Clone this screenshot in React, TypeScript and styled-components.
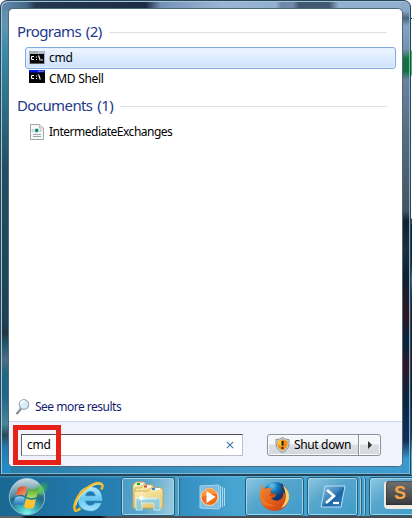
import React from 'react';
import styled, { createGlobalStyle } from 'styled-components';

const GlobalStyle = createGlobalStyle`
  *, *::before, *::after { box-sizing: border-box; }
  body { margin: 0; overflow: hidden; }
  svg { display: block; flex: none; }
`;

const Desktop = styled.main`
  width: 412px;
  height: 518px;
  display: flex;
  flex-direction: column;
  overflow: hidden;
  font: 12px/16px "Noto Sans", "Open Sans", sans-serif;
  color: #000;
  background: linear-gradient(#fafafa 0 18px, #222 18px 19px, #f5f5f5 19px 50px, #35cb3f 51px 75px, #fafafa 76px 218px, #34465e 219px 224px, #102440 225px 265px, #47678d 278px, #152c4e 300px, #4c1022 316px, #102344 335px, #451326 363px, #0c1c3b 390px, #123a6d 435px, #42bce4 455px, #398cc5);
`;

const Frame = styled.section`
  width: 411px;
  height: 475px;
  padding: 7px;
  border: 1px solid #2b4657;
  border-radius: 7px 7px 0 0;
  box-shadow: inset 1px 1px 0 #a0c4d8, inset -1px -1px 0 #7ab4d3;
  background:
    linear-gradient(#91abc9 0, #8aa6c6 10px, #4e637f 17px, #88a1c0 25px, #7890ae 48px, #13713b 58px, #14703d 70px, #6b819c 79px, #58697b 140px, #445361 210px, #14212d 220px, #202e3a 248px, #101f2e 275px, #32151e 315px, #0c2338 340px, #341722 365px, #0d2540 400px, #152e58 440px, #3b98cf 458px) right top / 9px 100% no-repeat,
    linear-gradient(90deg, #638aae 0, #456988 25px, #243850 35px, #1d2c43 145px, #7792b8 160px, #9ab4d6 220px, #93b0d0 275px, #7088a8 280px 292px, #425873 298px 328px, #93b0d0 338px) left top / 100% 9px no-repeat,
    linear-gradient(#638aae 0, #6096b2 25px, #3a8dab 48px, #2d778e 90px, #244c60 170px, #204456 300px, #1d3e50 325px, #26333e 332px, #20566e 343px, #506b83 358px, #216683 372px, #20658a 395px, #47869a 423px, #28485b 434px, #2379ac 446px, #238cc7 465px) left top / 9px 100% no-repeat,
    linear-gradient(90deg, #297da9, #419acb 60%, #3e9fd2);
`;

const Results = styled.div`
  width: 395px;
  height: 459px;
  display: flex;
  flex-direction: column;
  overflow: hidden;
  border: 1px solid #4c687c;
  border-radius: 5px;
  background: #fff;
`;

const Body = styled.div`
  flex: 1;
  min-height: 0;
  display: flex;
  flex-direction: column;
  padding: 11px 6px 4px 8px;
`;

const Heading = styled.h2<{ $gap?: number }>`
  height: 22px;
  margin: ${({ $gap = 0 }) => $gap}px 9px 0 0;
  display: flex;
  align-items: center;
  gap: 7px;
  color: #23398b;
  font-size: 15px;
  line-height: 22px;
  font-weight: 400;
  word-spacing: 1.5px;
  &::after { content: ''; flex: 1; height: 1px; background: #dedfe0; margin-top: 3px; }
`;

const Text = styled.span<{ $size?: number; $track?: number; $color?: string }>`
  white-space: nowrap;
  font-size: ${({ $size = 12 }) => $size}px;
  letter-spacing: ${({ $track = 0 }) => $track}px;
  color: ${({ $color = 'inherit' }) => $color};
`;

const ResultRow = styled.div<{ $selected?: boolean; $height: number; $gap?: number }>`
  height: ${({ $height }) => $height}px;
  margin: ${({ $gap = 0 }) => $gap}px 0 0 8px;
  padding-left: 3px;
  display: flex;
  align-items: center;
  gap: 4px;
  border: 1px solid ${({ $selected }) => ($selected ? '#83a9da' : 'transparent')};
  border-radius: 3px;
  background: ${({ $selected }) => ($selected ? 'linear-gradient(#edf5ff, #cee2fe)' : 'transparent')};
  box-shadow: ${({ $selected }) => ($selected ? 'inset 0 0 0 1px #e4f0ff' : 'none')};
`;

const MoreResults = styled.div`
  margin-top: auto;
  height: 20px;
  display: flex;
  align-items: center;
  gap: 4px;
  margin-left: -2px;
`;

const Footer = styled.footer`
  height: 45px;
  display: flex;
  align-items: center;
  padding: 1px 21px 0 5px;
  border-top: 1px solid #ccd9ea;
  background: #f0f3fb;
`;

const SearchBox = styled.div`
  width: 222px;
  height: 22px;
  margin-left: 7px;
  display: flex;
  align-items: center;
  justify-content: space-between;
  padding: 0 8px 0 5px;
  background: #fff;
  border: 1px solid #b8bfc8;
  border-top-color: #4f5358;
  border-left-color: #5d6066;
`;

const Callout = styled.div`
  position: absolute;
  left: 13px;
  top: 425px;
  width: 48px;
  height: 40px;
  border: 5px solid #e62117;
`;

const ShutdownGroup = styled.div`
  width: 114px;
  height: 22px;
  margin-left: auto;
  display: flex;
  border: 1px solid #8c9098;
  border-radius: 3px;
  background: linear-gradient(#f5f6f8 0 45%, #dcdee3 50%, #d5d8de);
  box-shadow: inset 0 0 0 1px #fafbfc;
`;

const ShutdownButton = styled.div`
  width: 91px;
  display: flex;
  align-items: center;
  gap: 4px;
  padding-left: 7px;
  border-right: 1px solid #8c9098;
`;

const ArrowButton = styled.div`
  flex: 1;
  display: grid;
  place-items: center;
  border-left: 1px solid #fafbfc;
`;

const Taskbar = styled.nav`
  height: 43px;
  display: flex;
  border-top: 1px solid #174258;
  background:
    linear-gradient(90deg, #626468 0 20px, #101216 26px 100px, #4b4d53 108px) left bottom / 100% 2px no-repeat,
    linear-gradient(rgba(136,205,238,.45), transparent 2px),
    linear-gradient(90deg, #196892 0, #2277a9 75px, #2e89bd 165px, #48a4d0 235px, #3e9dce);
`;

const TaskItem = styled.div<{ $width: number; $gap?: number; $open?: boolean; $shift?: number; $bright?: boolean }>`
  width: ${({ $width }) => $width}px;
  height: 39px;
  flex: none;
  margin: 1px 0 0 ${({ $gap = 0 }) => $gap}px;
  padding-left: ${({ $shift = 0 }) => $shift}px;
  display: flex;
  align-items: center;
  justify-content: ${({ $shift }) => ($shift ? 'flex-start' : 'center')};
  border: ${({ $open }) => ($open ? '1px solid #245c76' : '0')};
  border-radius: 3px;
  box-shadow: ${({ $open }) => ($open ? 'inset 0 0 0 1px #a1d5ea' : 'none')};
  background: ${({ $open, $bright }) => ($open ? ($bright ? 'linear-gradient(100deg, #4b9bc4, #5aa6cb 45%, #93c7de 90%)' : 'linear-gradient(145deg, #8ec7e1 0, #57a6cc 40%, #3e9cca)') : 'transparent')};
`;

const StackEdge = styled.div<{ $width?: number }>`
  width: ${({ $width = 4 }) => $width}px;
  height: 39px;
  margin-top: 1px;
  flex: none;
  border-right: 1px solid #2b657e;
  border-radius: 0 3px 3px 0;
  box-shadow: inset -1px 0 #93cce4;
  background: #469fc8;
`;

function ConsoleIcon({ blue = false }: { blue?: boolean }) {
  return <svg width="16" height={blue ? 18 : 16} viewBox={blue ? '0 0 16 18' : '0 -1 16 16'}>
    <path d="M0 0h16v13H0z" fill={blue ? '#070707' : '#aeb3b9'} />
    <path d="M1 3h14v9.500H1z" fill="#050505" />
    <path d="M0 0h16v2.500H0z" fill={blue ? '#0716df' : '#a3abb4'} />
    <path d="M9.500 1.200h1M11.500 1.200h1M13.500 1.200h1" stroke="#fff" />
    <path d="M5 5.500H3l-.5.5v2l.5.500h2M7 6h1M7 8.500h1M9.500 4.500l1.800 5" fill="none" stroke="#fff" strokeWidth="1.100" />
    {!blue && <path d="M12 9h2" stroke="#fff" />}
  </svg>;
}

function DocumentIcon() {
  return <svg width="16" height="16" viewBox="0 0 16 16">
    <path d="M1.500.5h9L14.500 4v11.500h-13z" fill="#f8f9f9" stroke="#a0a5a8" /><path d="M10.500.5V4h4" fill="#dfe3e4" stroke="#b5babc" />
    <circle cx="7.600" cy="6.500" r="2" fill="#19a77c" /><circle cx="8" cy="6.200" r=".9" fill="#21559c" />
    <path d="M4.500 5L3 6.500 4.500 8M10.700 5l1.500 1.500L10.700 8" fill="none" stroke="#81909a" strokeWidth=".8" /><path d="M4 10.500h8M4 12.500h8" stroke="#9aa5ab" />
  </svg>;
}

function SearchIcon() {
  return <svg width="16" height="18" viewBox="0 0 16 18"><path d="M6 10.500L1.500 16" stroke="#777c82" strokeWidth="2.200" /><path d="M5.500 10.500L1 15.500" stroke="#cfd4d7" strokeWidth=".8" /><circle cx="9" cy="6.500" r="4.800" fill="#d7edfa" stroke="#9fa9b4" strokeWidth="1.200" /><path d="M6 6q0-3 3.500-3" fill="none" stroke="#fff" strokeWidth="1.800" /></svg>;
}

function ShieldIcon() {
  return <svg width="15" height="16" viewBox="0 0 15 16"><path d="M7.5.5Q10 2.8 14 2.5V7q-.5 6-6.5 8.5Q1.5 13 1 7V2.5Q5 2.8 7.5.5" fill="#d5dade" stroke="#88929b" /><path d="M7.5 2Q9.8 4 12.7 3.7V7q-.5 4.5-5.2 6.8Q2.800 11.500 2.300 7V3.700Q5.200 4 7.500 2" fill="#ed8d13" /><path d="M3 4q2.500 0 4-1.300v6.100Q4 9 2.500 7z" fill="#ffc338" /><path d="M7.500 4v4.500" stroke="#211b13" strokeWidth="2" /><circle cx="7.500" cy="11" r="1.100" fill="#211b13" /></svg>;
}

function StartIcon() {
  return <svg width="43" height="40" viewBox="0 0 43 40">
    <defs>
      <radialGradient id="orb" cx=".5" cy="1" r="1"><stop stopColor="#88fff0" /><stop offset=".25" stopColor="#45bcc2" /><stop offset=".6" stopColor="#206783" /><stop offset="1" stopColor="#8da9b6" /></radialGradient>
      <linearGradient id="orbShine" x2="0" y2="1"><stop stopColor="#ecf4f5" stopOpacity=".65" /><stop offset="1" stopColor="#aacbd5" stopOpacity=".18" /></linearGradient>
      <radialGradient id="green"><stop stopColor="#55d644" stopOpacity=".9" /><stop offset="1" stopColor="#2fa646" stopOpacity="0" /></radialGradient>
      <linearGradient id="red" x2="1" y2="1"><stop stopColor="#cc3b1e" /><stop offset="1" stopColor="#ffa270" /></linearGradient>
      <linearGradient id="leaf" x2="0" y2="1"><stop stopColor="#4ba52e" /><stop offset="1" stopColor="#b6dd5b" /></linearGradient>
      <linearGradient id="blue" x2="0" y2="1"><stop stopColor="#8dcff2" /><stop offset="1" stopColor="#246cbc" /></linearGradient>
    </defs>
    <circle cx="19" cy="20" r="17.700" fill="url(#orb)" stroke="#8fbdce" /><path d="M2 18a17 17 0 0 1 34 0Q21 13 2 22" fill="url(#orbShine)" />
    <ellipse cx="32" cy="13" rx="12" ry="7" fill="url(#green)" transform="rotate(-40 32 13)" />
    <path d="M10 11Q14.500 8 19 10.500L17 19q-5-2.500-9.500 0z" fill="url(#red)" /><path d="M20.500 11.500q5 2.500 10-.5l-2 9q-5 2-10 0z" fill="url(#leaf)" /><path d="M7.200 20.500q4.500-2.500 9.500 0l-2 8q-4.500-2.500-9.500 0z" fill="url(#blue)" /><path d="M18 21.500q5 2.500 10 .5l-2 8.500q-5 2.500-10-.5z" fill="#ffc331" />
  </svg>;
}

function ExplorerEIcon() {
  return <svg width="32" height="32" viewBox="0 0 34 34">
    <defs><linearGradient id="ie" x2="0" y2="1"><stop stopColor="#b8eafd" /><stop offset=".5" stopColor="#67c8f0" /><stop offset="1" stopColor="#a2e1fb" /></linearGradient></defs>
    <path fillRule="evenodd" d="M31 21H13q.7 5 5.500 5 3.500 0 5-2.500h6.500Q27 32 18 32 5.500 31 5.500 19T18 6q13 0 13 15M13 16h11q-1-5-5.500-5T13 16" fill="url(#ie)" stroke="#4eb2df" strokeWidth=".5" />
    <path d="M8 29Q1 35 1.500 27 3 16 14 8 27-1 31 4q1 2-1 5" fill="none" stroke="#edb92d" strokeWidth="2.800" /><path d="M3 26Q5 16 16 8 26 1 30 4" fill="none" stroke="#ffe991" />
  </svg>;
}

function FoldersIcon() {
  return <svg width="33" height="31" viewBox="0 0 33 31">
    <defs><linearGradient id="folder" x2=".5" y2="1"><stop stopColor="#fff1b2" /><stop offset="1" stopColor="#e6ca77" /></linearGradient></defs>
    <g stroke="#c5a454" strokeWidth=".8" fill="url(#folder)"><path d="M1 27V4l3-3h8l2 3h7v23z" /><path d="M3 27V7h6l2-3h9l2 3h7v20z" /><path d="M2 10h14l3-3h11l1 3v17H2z" /></g>
    <path d="M5 3h6M12 5.500h7M20 8h8" stroke="#fff" strokeWidth="2" /><path d="M5 3h3" stroke="#0aaa36" strokeWidth="2" /><path d="M12 5.500h3" stroke="#d94127" strokeWidth="2" /><path d="M20 8h3" stroke="#288ddc" strokeWidth="2" />
    <path d="M4 29V19q0-2 3-2h18q3 0 3 2v10h-6v-7H10v7z" fill="#88c9df" fillOpacity=".9" stroke="#d2f0fa" strokeWidth=".8" /><path d="M7 18h18" stroke="#e1faff" /><path d="M9.500 11v13M3 17h13M6 13.500l7 7M6 20.500l7-7" stroke="#fff" strokeWidth=".6" /><circle cx="9.500" cy="17" r="2" fill="#fff" opacity=".75" />
  </svg>;
}

function PlayerIcon() {
  return <svg width="28" height="26" viewBox="0 0 28 26">
    <path d="M1 2l19-1v24L1 24z" fill="#7dbde0" stroke="#a8d5ea" /><path d="M21.500 2v22M23.500 3v20M25.500 4v18" stroke="#bce1f3" strokeWidth=".9" />
    <circle cx="10.500" cy="13" r="8.500" fill="#f36c17" stroke="#fff2e0" strokeWidth=".8" /><path d="M3 13q8-4 15-3-1-6-8-6-6 1-7 9" fill="#ffa64a" opacity=".75" /><path d="M7.500 7v12l9-6z" fill="#fff" />
  </svg>;
}

function FirefoxIcon() {
  return <svg width="31" height="31" viewBox="0 0 31 31">
    <defs><linearGradient id="fox" x2="1" y2="1"><stop stopColor="#f08a35" /><stop offset=".5" stopColor="#e45e17" /><stop offset="1" stopColor="#c73a15" /></linearGradient><radialGradient id="globe" cx=".35" cy=".15"><stop stopColor="#68c8ea" /><stop offset=".5" stopColor="#147abc" /><stop offset="1" stopColor="#12376f" /></radialGradient></defs>
    <circle cx="16.500" cy="13.500" r="12.500" fill="url(#globe)" />
    <path d="M24 4q7 6 6 14-3 12-15 12Q3 29 1 17 0 9 4 4l1 4q4-2 8 0-2 2-1 4 2 2 5 2-1 3-5 3 5 5 10 1 3-2 2-7 4 3 2 7 2-8-2-14" fill="url(#fox)" /><path d="M24 4q7 6 6 14-2 7-8 9 5-6 5-12-1-6-3-11" fill="#f7d267" />
    <path d="M4 5Q0 13 5 19q4 5 11 5-10 4-14-5Q0 12 4 5" fill="#f08a35" opacity=".55" /><path d="M12 12l5 1-3 3-4-2z" fill="#bd4a19" />
  </svg>;
}

function PowerShellIcon() {
  return <svg width="28" height="24" viewBox="0 0 28 24">
    <defs><linearGradient id="shell" x2="1" y2="1"><stop stopColor="#89bfdd" /><stop offset=".45" stopColor="#4187bc" /><stop offset=".55" stopColor="#1f66a7" /><stop offset="1" stopColor="#327abb" /></linearGradient></defs>
    <path d="M6 1h20l-4 21H2z" fill="url(#shell)" stroke="#b5e1f4" /><path d="M8 5l7 6-8 7" fill="none" stroke="#fff" strokeWidth="2.600" /><path d="M14 18h6" stroke="#fff" strokeWidth="2.200" />
  </svg>;
}

const EditorTile = styled.div`
  width: 30px;
  height: 28px;
  margin-bottom: 3px;
  flex: none;
  display: grid;
  place-items: center;
  border: 2px solid #eeeae2;
  border-width: 0 0 4px 2px;
  border-radius: 4px;
  background: linear-gradient(#707173, #393a3c);
  color: #f9a447;
  font: bold 18px/22px "Liberation Sans", sans-serif;
  box-shadow: inset 0 0 2px #151719;
`;

export default function App() {
  return <><GlobalStyle /><Desktop>
    <Frame><Results>
      <Body>
        <Heading><Text $size={15} $track={-0.6}>Programs (2)</Text></Heading>
        <ResultRow $selected $height={22} $gap={5}><ConsoleIcon /><Text $track={-0.2}>cmd</Text></ResultRow>
        <ResultRow $height={20}><ConsoleIcon blue /><Text $track={-0.3}>CMD Shell</Text></ResultRow>
        <Heading $gap={5}><Text $size={15} $track={-0.6}>Documents (1)</Text></Heading>
        <ResultRow $height={24} $gap={4}><DocumentIcon /><Text $track={-0.5}>IntermediateExchanges</Text></ResultRow>
        <MoreResults><SearchIcon /><Text $color="#151c70" $track={-0.5}>See more results</Text></MoreResults>
      </Body>
      <Footer><SearchBox><Text $track={-0.2}>cmd</Text><svg width="8" height="8" viewBox="0 0 8 8"><path d="M.8.8l6.400 6.400m0-6.400L.8 7.200" stroke="#477aaa" strokeWidth="1.200" /></svg></SearchBox><ShutdownGroup><ShutdownButton><ShieldIcon /><Text $track={-0.35}>Shut down</Text></ShutdownButton><ArrowButton><svg width="6" height="8"><path d="M1 0l4 4-4 4z" fill="#303236" /></svg></ArrowButton></ShutdownGroup></Footer>
    </Results></Frame>
    <Taskbar>
      <TaskItem $width={45} $gap={7} $shift={1}><StartIcon /></TaskItem><TaskItem $width={40} $gap={17}><ExplorerEIcon /></TaskItem>
      <TaskItem $width={54} $gap={12} $open $bright><FoldersIcon /></TaskItem><StackEdge $width={5} />
      <TaskItem $width={29} $gap={18}><PlayerIcon /></TaskItem>
      <TaskItem $width={59} $gap={18} $open><FirefoxIcon /></TaskItem><TaskItem $width={51} $gap={3} $open><PowerShellIcon /></TaskItem><StackEdge /><StackEdge />
      <TaskItem $width={56} $gap={3} $open $shift={14}><EditorTile>S</EditorTile></TaskItem>
    </Taskbar>
    <Callout />
  </Desktop></>;
}
